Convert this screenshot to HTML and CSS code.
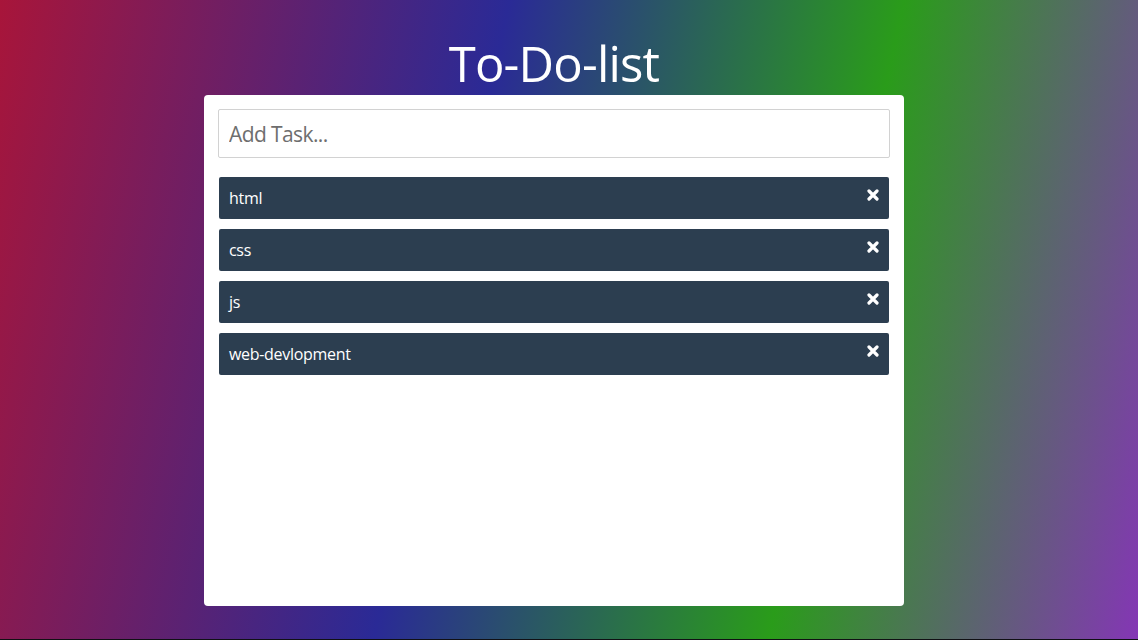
FILE: index.html
```html
<!DOCTYPE html>
<html lang="en">
<head>
<meta charset="utf-8">
<title>To-Do-list</title>
<link rel="stylesheet" href="styles.css">
</head>
<body>
  <main class="page">
    <h1 class="title">To-Do-list</h1>
    <section class="card">
      <input class="task-input" type="text" placeholder="Add Task...">
      <ul class="task-list">
        <li class="task"><span class="task-text">html</span><button class="task-delete" aria-label="Delete"><svg width="12" height="12" viewBox="0 0 12 12"><path d="M2 2 L10 10 M10 2 L2 10" stroke="#fff" stroke-width="3.2" stroke-linecap="round"/></svg></button></li>
        <li class="task"><span class="task-text">css</span><button class="task-delete" aria-label="Delete"><svg width="12" height="12" viewBox="0 0 12 12"><path d="M2 2 L10 10 M10 2 L2 10" stroke="#fff" stroke-width="3.2" stroke-linecap="round"/></svg></button></li>
        <li class="task"><span class="task-text">js</span><button class="task-delete" aria-label="Delete"><svg width="12" height="12" viewBox="0 0 12 12"><path d="M2 2 L10 10 M10 2 L2 10" stroke="#fff" stroke-width="3.2" stroke-linecap="round"/></svg></button></li>
        <li class="task"><span class="task-text">web-devlopment</span><button class="task-delete" aria-label="Delete"><svg width="12" height="12" viewBox="0 0 12 12"><path d="M2 2 L10 10 M10 2 L2 10" stroke="#fff" stroke-width="3.2" stroke-linecap="round"/></svg></button></li>
      </ul>
    </section>
  </main>
</body>
</html>
```
FILE: styles.css
```css
html {
  background: #101014;
}
body {
  margin: 0;
  height: 639px;
  overflow: hidden;
  font-family: "Open Sans", "Noto Sans", sans-serif;
  background: linear-gradient(102deg, #a8153a 0%, #2a2a96 40%, #2a9c1a 71%, #8436b5 100%);
}
.page {
  display: flex;
  flex-direction: column;
  align-items: center;
  padding: 39px 30px 0 0;
}
.title {
  margin: 0 0 8px 0;
  font-size: 49px;
  line-height: 48px;
  font-weight: 400;
  color: #fff;
  letter-spacing: -0.8px;
}
.card {
  box-sizing: border-box;
  width: 700px;
  height: 511px;
  background: #fff;
  border-radius: 4px;
  padding: 14px;
}
.task-input {
  box-sizing: border-box;
  display: block;
  width: 100%;
  height: 49px;
  border: 1px solid #d2d2d2;
  border-radius: 2px;
  padding: 0 10px;
  font-family: "Open Sans", sans-serif;
  font-size: 21px;
  letter-spacing: -0.6px;
  color: #333;
  outline: none;
}
.task-input::placeholder {
  color: #6e6e6e;
}
.task-list {
  list-style: none;
  margin: 19px 1px 0 1px;
  padding: 0;
  display: flex;
  flex-direction: column;
  gap: 10px;
}
.task {
  display: flex;
  align-items: center;
  justify-content: space-between;
  height: 42px;
  padding: 0 10px;
  background: #2c3e50;
  border-radius: 2px;
  color: #fff;
  font-size: 16px;
  letter-spacing: -0.3px;
}
.task-text {
  line-height: 1;
}
.task-delete {
  display: flex;
  border: 0;
  padding: 0;
  margin: 0 0 6px 0;
  background: none;
  cursor: pointer;
}
```
